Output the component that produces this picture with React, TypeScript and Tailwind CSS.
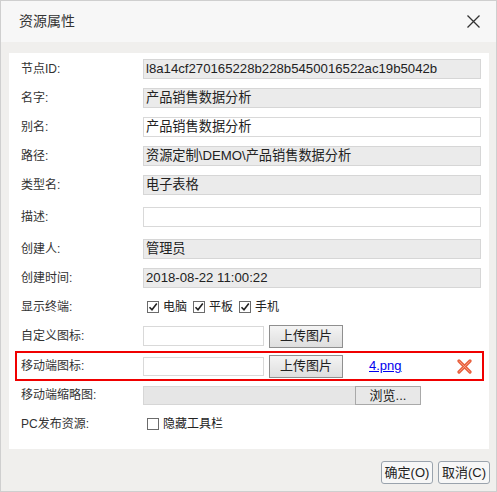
const ID = "l8a14cf270165228b228b5450016522ac19b5042b"

const font = { fontFamily: '"Liberation Sans", "Noto Sans CJK SC", sans-serif' }

function Check({ on }: { on: boolean }) {
  return (
    <span className="inline-flex h-[12px] w-[12px] items-center justify-center border border-[#6b6b6b] bg-white">
      {on && (
        <svg width="10" height="10" viewBox="0 0 10 10">
          <path d="M1.5 5.2 L4 7.8 L8.8 1.5" fill="none" stroke="#222" strokeWidth="1.6" />
        </svg>
      )}
    </span>
  )
}

function Row({ label, h, red, children }: { label: string; h: string; red?: boolean; children?: React.ReactNode }) {
  return (
    <div className={`flex items-center border-2 ${red ? "border-[#f00000]" : "border-transparent"} ${h}`}>
      <div className="w-[126px] shrink-0 pl-[4px] text-[12px] text-[#333]">{label}</div>
      <div className="flex flex-1 items-center pr-[1px]">{children}</div>
    </div>
  )
}

function Field({ value, ro }: { value?: string; ro?: boolean }) {
  return (
    <div
      className={`flex h-[20px] flex-1 items-center border px-[2px] text-[13.2px] leading-none text-[#222] ${
        ro ? "border-[#d6d6d6] bg-[#ebebeb]" : "border-[#d9d9d9] bg-white"
      }`}
    >
      {value}
    </div>
  )
}

function Upload() {
  return (
    <button className="ml-[5px] h-[23px] w-[74px] border border-[#8f8f8f] bg-gradient-to-b from-[#f4f4f4] to-[#dedede] text-[13px] text-[#222]">
      上传图片
    </button>
  )
}

export default function App() {
  return (
    <div className="flex h-[492px] w-[497px] flex-col border border-[#cfcfcf] bg-[#f0efed]" style={font}>
      <div className="flex h-[41px] shrink-0 items-center justify-between bg-[#f7f7f7] pl-[18px] pr-[16px]">
        <span className="text-[14px] text-[#333]">资源属性</span>
        <svg width="13" height="13" viewBox="0 0 13 13">
          <path d="M0.5 0.5 L12.5 12.5 M12.5 0.5 L0.5 12.5" stroke="#333" strokeWidth="1.3" />
        </svg>
      </div>

      <div className="mt-[11px] ml-[8px] mr-[7px] flex h-[396px] flex-col bg-white pt-[1px] pl-[6px] pr-[5px]">
        <Row label="节点ID:" h="h-[29px]"><Field ro value={ID} /></Row>
        <Row label="名字:" h="h-[29px]"><Field ro value="产品销售数据分析" /></Row>
        <Row label="别名:" h="h-[29px]"><Field value="产品销售数据分析" /></Row>
        <Row label="路径:" h="h-[29px]"><Field ro value="资源定制\DEMO\产品销售数据分析" /></Row>
        <Row label="类型名:" h="h-[29px]"><Field ro value="电子表格" /></Row>
        <Row label="描述:" h="h-[35px]"><Field /></Row>
        <Row label="创建人:" h="h-[29px]"><Field ro value="管理员" /></Row>
        <Row label="创建时间:" h="h-[29px]"><Field ro value="2018-08-22 11:00:22" /></Row>
        <Row label="显示终端:" h="h-[29px]">
          <div className="ml-[4px] flex items-center text-[12px] text-[#222]">
            <Check on /><span className="ml-[4px] mr-[6px]">电脑</span>
            <Check on /><span className="ml-[4px] mr-[6px]">平板</span>
            <Check on /><span className="ml-[4px]">手机</span>
          </div>
        </Row>
        <Row label="自定义图标:" h="h-[30px]">
          <div className="h-[20px] w-[121px] border border-[#d9d9d9] bg-white" />
          <Upload />
        </Row>
        <Row label="移动端图标:" h="h-[30px]" red>
          <div className="h-[19px] w-[121px] border border-[#d9d9d9] bg-white" />
          <Upload />
          <a className="ml-[26px] text-[13px] text-[#0000ee] underline">4.png</a>
          <svg className="ml-[55px]" width="15" height="15" viewBox="0 0 15 15">
            <path d="M2 2 L13 13 M13 2 L2 13" stroke="#e8613f" strokeWidth="3.2" strokeLinecap="round" />
            <path d="M2.5 2.5 L12.5 12.5 M12.5 2.5 L2.5 12.5" stroke="#f7a48a" strokeWidth="0.8" strokeLinecap="round" />
          </svg>
        </Row>
        <Row label="移动端缩略图:" h="h-[28px]">
          <div className="h-[19px] w-[212px] border border-[#d6d6d6] border-r-0 bg-[#e6e6e6]" />
          <button className="h-[19px] w-[66px] border border-[#a9a9a9] bg-[#e8e8e8] text-[13px] leading-none text-[#222]">
            浏览...
          </button>
        </Row>
        <Row label="PC发布资源:" h="h-[30px]">
          <div className="ml-[4px] flex items-center text-[12px] text-[#222]">
            <Check on={false} /><span className="ml-[4px]">隐藏工具栏</span>
          </div>
        </Row>
      </div>

      <div className="mt-[12px] flex justify-end gap-[5px] pr-[6px]">
        <button className="h-[23px] w-[52px] rounded-[3px] border border-[#9aa3ad] bg-[#f7f7f7] text-[13px] text-[#222]">
          确定(O)
        </button>
        <button className="h-[23px] w-[52px] rounded-[3px] border border-[#9aa3ad] bg-[#f7f7f7] text-[13px] text-[#222]">
          取消(C)
        </button>
      </div>
    </div>
  )
}
